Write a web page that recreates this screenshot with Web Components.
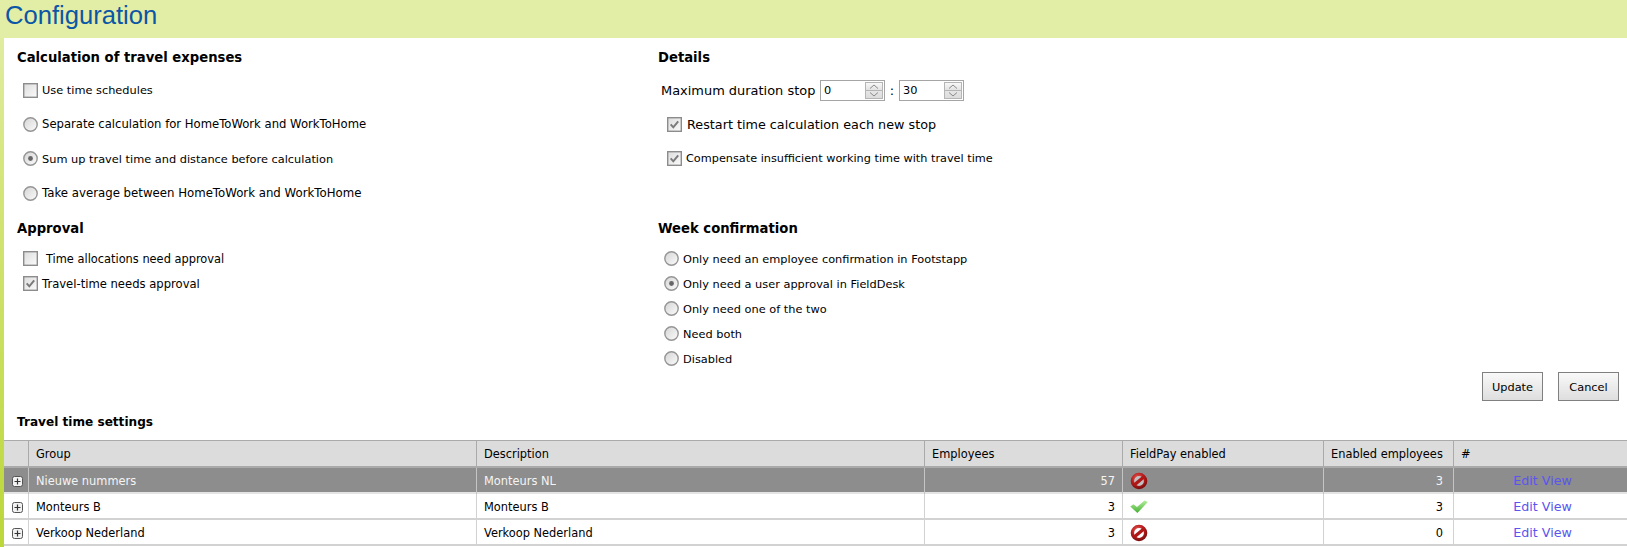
<!DOCTYPE html>
<html><head><meta charset="utf-8"><title>Configuration</title>
<style>html,body{margin:0;padding:0;background:#fff;overflow:hidden}body{width:1627px;height:547px;font-family:"DejaVu Sans",sans-serif}</style>
</head><body>
<config-page>
  <page-header slot="header">Configuration</page-header>
  <div slot="left-top">
    <form-section heading="Calculation of travel expenses">
      <opt-row kind="check" h="34" label="Use time schedules"></opt-row>
      <opt-row kind="radio" h="34" fs="11.63" label="Separate calculation for HomeToWork and WorkToHome"></opt-row>
      <opt-row kind="radio" on h="35" label="Sum up travel time and distance before calculation"></opt-row>
      <opt-row kind="radio" h="34" fs="11.76" label="Take average between HomeToWork and WorkToHome"></opt-row>
    </form-section>
  </div>
  <div slot="right-top">
    <form-section heading="Details">
      <duration-row h="34"></duration-row>
      <opt-row kind="check" on fs="12.78" gap="5" h="34" indent="3" label="Restart time calculation each new stop"></opt-row>
      <opt-row kind="check" on fs="11.27" h="35" indent="3" label="Compensate insufficient working time with travel time"></opt-row>
    </form-section>
  </div>
  <div slot="left-bottom">
    <form-section heading="Approval" tight>
      <opt-row kind="check" h="25" gap="8" fs="11.4" label="Time allocations need approval"></opt-row>
      <opt-row kind="check" on h="25" fs="11.6" label="Travel-time needs approval"></opt-row>
    </form-section>
  </div>
  <div slot="right-bottom">
    <form-section heading="Week confirmation" tight>
      <opt-row kind="radio" h="25" label="Only need an employee confirmation in Footstapp"></opt-row>
      <opt-row kind="radio" on h="25" label="Only need a user approval in FieldDesk"></opt-row>
      <opt-row kind="radio" h="25" label="Only need one of the two"></opt-row>
      <opt-row kind="radio" h="25" label="Need both"></opt-row>
      <opt-row kind="radio" h="25" label="Disabled"></opt-row>
    </form-section>
  </div>
  <action-bar slot="actions"><push-button w="61">Update</push-button><push-button w="61">Cancel</push-button></action-bar>
  <travel-grid slot="grid" heading="Travel time settings">
    <grid-row selected group="Nieuwe nummers" desc="Monteurs NL" emp="57" pay="no" en="3"></grid-row>
    <grid-row group="Monteurs B" desc="Monteurs B" emp="3" pay="yes" en="3"></grid-row>
    <grid-row group="Verkoop Nederland" desc="Verkoop Nederland" emp="3" pay="no" en="0"></grid-row>
  </travel-grid>
</config-page>
<script>
const T='"DejaVu Sans",sans-serif';
function def(name,fn){customElements.define(name,class extends HTMLElement{connectedCallback(){if(this.shadowRoot)return;this.attachShadow({mode:'open'}).innerHTML=fn(this);}});}
const a=(e,n,d='')=>e.getAttribute(n)??d;

def('config-page',()=>`<style>
:host{display:block;width:1627px;height:547px;overflow:hidden;background:#fff;color:#000}
.wrap{display:flex;height:509px}
.strip{width:4px;flex:none;background:linear-gradient(#e0eca0,#d3e578 30%,#bbd73a)}
.main{flex:1;min-width:0;display:flex;flex-direction:column}
.forms{display:grid;grid-template-columns:641px 1fr;padding:0 0 0 13px}
.top{height:171px}.bottom{height:160px}
</style>
<slot name="header"></slot>
<div class="wrap"><div class="strip"></div><div class="main">
<div class="forms">
<div class="top"><slot name="left-top"></slot></div><div class="top"><slot name="right-top"></slot></div>
<div class="bottom"><slot name="left-bottom"></slot></div><div class="bottom"><slot name="right-bottom"></slot></div>
</div>
<slot name="actions"></slot>
<slot name="grid"></slot>
</div></div>`);

def('page-header',()=>`<style>
:host{display:block;height:38px;box-sizing:border-box;background:#e2eda5;padding:0 0 0 5px;font:25.6px/31px "Liberation Sans",Arial,sans-serif;color:#0b56a6}
</style><slot></slot>`);

def('action-bar',()=>`<style>
:host{display:flex;justify-content:flex-end;gap:15px;padding-right:8px;height:29px;margin-top:3px}
</style><slot></slot>`);

def('form-section',e=>`<style>
:host{display:block}
h2{margin:0;font:bold 13.2px/20px ${T};color:#000;padding-top:10px}
.body{display:block;margin-top:${e.hasAttribute('tight')?'7px':'5px'}}
</style><h2>${a(e,'heading')}</h2><div class="body"><slot></slot></div>`);

const box=on=>`<svg width="15" height="15" viewBox="0 0 15 15"><defs><linearGradient id="b" x1="0" y1="0" x2="1" y2="1"><stop offset="0" stop-color="#dcdcdc"/><stop offset="1" stop-color="#fbfbfb"/></linearGradient></defs><rect x=".7" y=".7" width="13.6" height="13.6" fill="url(#b)" stroke="#8c8c8c" stroke-width="1.4"/>${on?'<path d="M3.7 7.4 6.3 10.3 11.2 4.4" fill="none" stroke="#7a7a7a" stroke-width="2"/>':''}</svg>`;
const radio=on=>`<svg width="15" height="15" viewBox="0 0 15 15"><defs><linearGradient id="r" x1="0" y1="0" x2="1" y2="1"><stop offset="0" stop-color="#d4d4d4"/><stop offset="1" stop-color="#fcfcfc"/></linearGradient></defs><circle cx="7.5" cy="7.5" r="6.7" fill="url(#r)" stroke="#959595" stroke-width="1.4"/>${on?'<circle cx="7.5" cy="7.5" r="2.4" fill="#666"/>':''}</svg>`;

def('opt-row',e=>{const on=e.hasAttribute('on');return `<style>
:host{display:flex;align-items:center;height:${a(e,'h','25')}px;padding-left:${6+ +a(e,'indent','0')}px;font:${a(e,'fs','11.35')}px ${T};color:#000;white-space:nowrap}
svg{flex:none;display:block}
span{margin-left:${a(e,'gap','4')}px}
</style>${a(e,'kind')=='check'?box(on):radio(on)}<span>${a(e,'label')}</span>`});

def('spin-box',e=>`<style>
:host{display:inline-flex;align-items:center;justify-content:space-between;box-sizing:border-box;width:65px;height:21px;border:1px solid #a5a5a5;background:#fff;padding:0 1px 0 3px;font:11.35px ${T};color:#000}
.b{display:flex;flex-direction:column;width:18px;height:17px}
.b i{flex:1;display:flex;align-items:center;justify-content:center;border:1px solid #b5b5b5;background:linear-gradient(#f8f8f8,#e2e2e2)}
.b i+i{border-top:0;background:linear-gradient(#e6e6e6,#dcdcdc)}
svg{display:block}
</style><span>${a(e,'value')}</span><div class="b"><i><svg width="10" height="5" viewBox="0 0 10 5"><path d="M1 4.5 5 1 9 4.5" fill="none" stroke="#8a8a8a"/></svg></i><i><svg width="10" height="5" viewBox="0 0 10 5"><path d="M1 .5 5 4 9 .5" fill="none" stroke="#8a8a8a"/></svg></i></div>`);

def('duration-row',e=>`<style>
:host{display:flex;align-items:center;height:${a(e,'h','34')}px;padding-left:3px;font:12.95px ${T};color:#000;white-space:nowrap}
.l{width:159px}
b{font-weight:normal;width:14px;text-align:center;display:block}
</style><span class="l">Maximum duration stop</span><spin-box value="0"></spin-box><b>:</b><spin-box value="30"></spin-box>`);

def('push-button',e=>`<style>
:host{display:inline-flex;align-items:center;justify-content:center;box-sizing:border-box;height:29px;width:${a(e,'w','60')}px;border:1px solid #808080;background:linear-gradient(#f9f9f9,#dedede);font:11.35px ${T};color:#000}
</style><slot></slot>`);

const cols='24px 448px 448px 198px 201px 130px 1fr';
def('travel-grid',e=>`<style>
:host{display:block}
h2{margin:0;font:bold 12.1px/20px ${T};color:#000;padding:11px 0 0 13px;height:39px;box-sizing:border-box}
.head{display:grid;grid-template-columns:${cols};height:28px;box-sizing:border-box;background:#dcdcdc;border-top:1px solid #aaa;border-bottom:2px solid #aaa;font:11.4px/26px ${T};color:#000}
.head div{border-left:1px solid #aaa;padding-left:7px;white-space:nowrap}
.head div:first-child{border:0}
</style><h2>${a(e,'heading')}</h2>
<div class="head"><div></div><div>Group</div><div>Description</div><div>Employees</div><div>FieldPay enabled</div><div>Enabled employees</div><div>#</div></div>
<slot></slot>`);

const plus=`<svg width="11" height="11" viewBox="0 0 11 11" style="display:block"><rect x=".5" y=".5" width="10" height="10" rx="2" fill="#f2f2f2" stroke="#555"/><path d="M2.5 5.5h6M5.5 2.5v6" stroke="#333" stroke-width="1.2"/></svg>`;
const icon={no:`<svg width="18" height="18" viewBox="0 0 18 18" style="display:block"><defs><radialGradient id="n" cx=".4" cy=".3" r=".8"><stop offset="0" stop-color="#e5605a"/><stop offset=".6" stop-color="#b81c1c"/><stop offset="1" stop-color="#7c0c0c"/></radialGradient></defs><circle cx="9" cy="9" r="5.5" fill="#fff" fill-opacity=".45"/><circle cx="9" cy="9" r="6.6" fill="none" stroke="url(#n)" stroke-width="3.4"/><path d="M4.2 13 13.8 5" stroke="#b01818" stroke-width="3.4"/></svg>`,
yes:`<svg width="18" height="18" viewBox="0 0 18 18" style="display:block"><defs><linearGradient id="y" x1="0" y1="0" x2="0" y2="1"><stop offset="0" stop-color="#b4ee9c"/><stop offset="1" stop-color="#45b032"/></linearGradient></defs><path d="M.3 8.6 3.4 6.2 7 9 14.4 2.6 17.8 4 7.4 15Z" fill="url(#y)"/></svg>`};
def('grid-row',e=>{const s=e.hasAttribute('selected');return `<style>
:host{display:grid;grid-template-columns:${cols};height:26px;box-sizing:border-box;background:${s?'#8d8d8d':'#fff'};color:${s?'#f4f4f4':'#000'};border-bottom:${s?'2px solid #e4e4e4':'2px solid #d2d2d2'};font:11.4px/26px ${T};white-space:nowrap}
div{border-left:1px solid ${s?'#c4c4c4':'#d2d2d2'};padding:0 7px;box-sizing:border-box;min-width:0}
div:first-of-type{border:0;padding:0 0 0 8px;display:flex;align-items:center}
.n{text-align:right}
.e{padding-right:10px}
.i{display:flex;align-items:center}
.l{text-align:center;padding:0 0 0 4px;color:#5a55ee;font-size:12.7px}
</style><div>${plus}</div><div>${a(e,'group')}</div><div>${a(e,'desc')}</div><div class="n">${a(e,'emp')}</div><div class="i">${icon[a(e,'pay')]}</div><div class="n e">${a(e,'en')}</div><div class="l">Edit View</div>`});
</script>
</body></html>
